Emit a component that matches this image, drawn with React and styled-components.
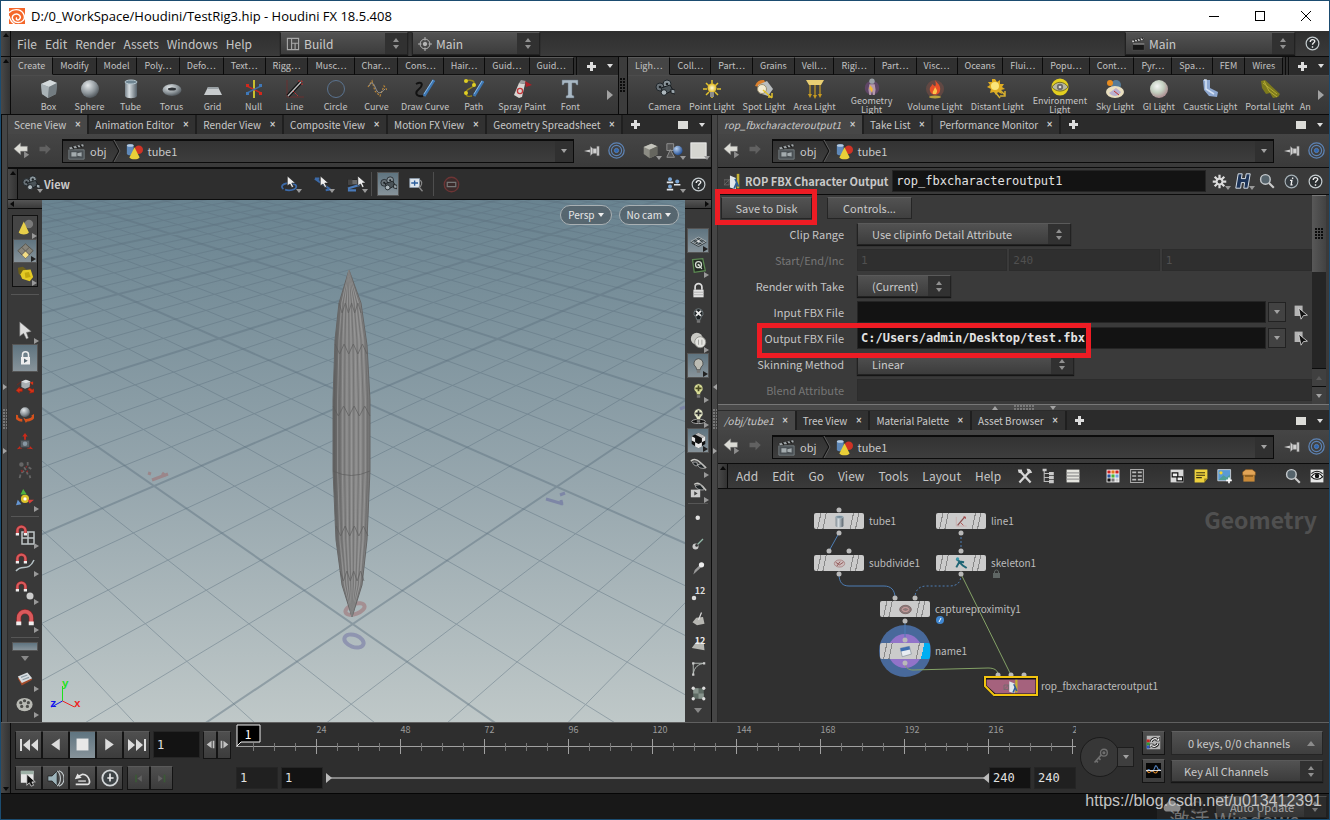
import React from 'react';
import styled, { createGlobalStyle, css } from 'styled-components';

const Global = createGlobalStyle`
  *, *::before, *::after { box-sizing: border-box; }
  html, body { margin: 0; height: 100%; }
  body {
    background: #1b1b1b;
    color: #c9c9c9;
    font: 11px/16px "Noto Sans CJK SC", "Noto Sans", sans-serif;
    overflow: hidden;
  }
  button, input, select { font: inherit; color: inherit; margin: 0; padding: 0; border: 0; background: none; }
  svg { display: block; flex: none; }
`;

/* ---------- icons ---------- */

const HiddenSvg = styled.svg`
  position: absolute;
  width: 0;
  height: 0;
`;

const Defs = () => (
  <HiddenSvg aria-hidden="true">
    <defs>
      <radialGradient id="ball" cx=".38" cy=".3" r=".75">
        <stop offset="0" stopColor="#e4e8ea" /><stop offset=".6" stopColor="#8c9499" /><stop offset="1" stopColor="#474d52" />
      </radialGradient>
      <radialGradient id="gi" cx=".4" cy=".35" r=".7">
        <stop offset="0" stopColor="#f4f6f4" /><stop offset=".5" stopColor="#c3d0c0" /><stop offset="1" stopColor="#a8848a" />
      </radialGradient>
      <radialGradient id="blueball" cx=".35" cy=".3" r=".75">
        <stop offset="0" stopColor="#b8d0ee" /><stop offset="1" stopColor="#1d4a92" />
      </radialGradient>
      <radialGradient id="sun" cx=".5" cy=".5" r=".5">
        <stop offset="0" stopColor="#fffde0" /><stop offset="1" stopColor="#e2b81c" />
      </radialGradient>
      <linearGradient id="cyl" x1="0" x2="1" y1="0" y2="0">
        <stop offset="0" stopColor="#78838b" /><stop offset=".35" stopColor="#d5dce0" /><stop offset="1" stopColor="#56616a" />
      </linearGradient>
    </defs>
  </HiddenSvg>
);

const P = (d, fill, stroke, w = 1, extra) => (
  <path d={d} fill={fill || 'none'} stroke={stroke || 'none'} strokeWidth={w} {...extra} />
);

const lightRays = (c) => (
  <g>
    {P('M10 1v4M10 15v4M1 10h4M15 10h4M4 4l3 3M13 13l3 3M16 4l-3 3M7 13l-3 3', null, c, 1.5)}
  </g>
);

const magnet = (
  <g>
    {P('M3 12V7a5 5 0 0 1 10 0v5', null, '#8d2326', 4)}
    {P('M3 11V7a5 5 0 0 1 10 0v4', null, '#d95a5c', 3)}
    {P('M1 10h4v3H1zM11 10h4v3h-4z', '#eee')}
  </g>
);

const arrowsRed = (
  <g>
    {P('M0 15l4-4v2h3v3H4v2zM20 17l-5 1 1-2-3-2 2-2 3 2 2-1zM19 6l-4 5M1 9l5-4', '#d23318', '#a11d0d', 0.6)}
  </g>
);

const camShapes = (
  <g>
    <circle cx="5" cy="8" r="4" fill="#687177" stroke="#20262a" />
    <circle cx="12" cy="5" r="4" fill="#8a959b" stroke="#20262a" />
    {P('M6 9l9-3 3 5-9 5z', '#4a5358', '#191d20')}
    {P('M16 10l4 1v4l-4-1z', '#9aa5ab', '#191d20')}
    <circle cx="9" cy="13.500" r="2.800" fill="#aeb8bd" stroke="#20262a" />
    <circle cx="5" cy="8" r="1.300" fill="#1c2124" /><circle cx="12" cy="5" r="1.300" fill="#1c2124" />
  </g>
);

const cursor = (x, y, c = '#eee') =>
  P(`M${x} ${y}v11l3-2 2 4 2-1-2-4h4z`, c, '#222', 0.7);

const bulb = (c, inner, edge = '#333') => (
  <g>
    {P('M10 2a5.500 5.500 0 0 0-3 10l1 3h4l1-3a5.500 5.500 0 0 0-3-10z', c, edge, 0.8)}
    {P('M8 15.500h4v3H8z', '#777')}
    {inner}
  </g>
);

const ICONS = {
  houdini: (
    <g>
      <rect width="20" height="20" fill="#f4672a" />
      {P('M0 6C4 1 14 0 18 7s-2 12-8 11-8-8-3-10 9 3 6 6-5-1-3-2', null, '#fff', 1.8)}
      {P('M0 10c1 4 3 8 7 10', null, '#fff', 1.6)}
    </g>
  ),
  box: (
    <g>
      {P('M2 5l9-4 7 3-1 11-8 4-6-4z', '#8c9498')}
      {P('M2 5l9-4 7 3-8 4z', '#d4dadc')}{P('M2 5l8 3-1 11-6-4z', '#a9b2b6')}{P('M10 8l8-4-1 11-8 4z', '#737c81')}
    </g>
  ),
  sphere: <circle cx="10" cy="10" r="9" fill="url(#ball)" />,
  gi: <circle cx="10" cy="10" r="9" fill="url(#gi)" />,
  tube: <g>{P('M4 3v14c1 3 11 3 12 0V3z', 'url(#cyl)')}<ellipse cx="10" cy="3" rx="6" ry="2" fill="#6f8592" stroke="#b7c8d0" /></g>,
  torus: <g><ellipse cx="10" cy="11" rx="9.500" ry="6" fill="url(#ball)" /><ellipse cx="10" cy="10" rx="4" ry="1.500" fill="#2e3236" /></g>,
  grid: <g>{P('M5 8h10l4 8H1z', '#c7cbcd')}{P('M5 8h10l1 2H4z', '#9aa1a5')}</g>,
  null: (
    <g>
      {P('M10 1v18', null, '#c8c02e', 2)}{P('M3 7l14 7', null, '#c32a20', 1.500)}{P('M3 14l14-7', null, '#3b6fa8', 1.500)}
      {P('M9 1h2v3H9zM9 16h2v3H9z', '#c8c02e')}{P('M2 5h3v3H2zM15 13h3v3h-3z', '#d3281c')}{P('M2 13h3v3H2zM15 5h3v3h-3z', '#3f78b8')}
    </g>
  ),
  line: (
    <g>
      {P('M2 1v17h17', null, '#6b3030', 1)}{P('M3 17L16 3', null, '#111', 4)}{P('M3 17L16 3', null, '#b9b9b9', 1.4)}
      {P('M13 2h4v4M8 12l5 5', null, '#c33', 1, { strokeDasharray: '2 1' })}
    </g>
  ),
  lineNode: (
    <g>{P('M2 3v14h16', null, '#c9a5a5', 1)}{P('M4 16L15 3', null, '#8d5050', 2)}{P('M13 3h3v3M9 12l4 4', null, '#a33', 1.200)}</g>
  ),
  circle: <circle cx="10" cy="10" r="8.500" fill="none" stroke="#5a7390" strokeWidth="1" />,
  curve: (
    <g>
      {P('M1 8l4-6 3 10 5 5 4-10 3 4', null, '#b88436', 1.2, { strokeDasharray: '2 1.500' })}
      {P('M2 7c4-8 6 2 8 5s4 2 8-2', null, '#9a9a9a', 1)}
    </g>
  ),
  drawcurve: <g>{P('M1 5c7-4 7 2 3 5s-4 8 4 7', null, '#121212', 2)}{P('M9 17L19 1', null, '#3e78b4', 3)}{P('M9 15L18 1', null, '#8db9e3', 1)}</g>,
  path: (
    <g>
      {P('M1 2c7-2 10 0 9 4S2 9 2 14s4 3 6 3', null, '#968518', 1.4)}
      <circle cx="2" cy="2" r="2" fill="#e0cf25" /><circle cx="10" cy="6" r="2" fill="#e0cf25" /><circle cx="2" cy="14" r="2" fill="#e0cf25" />
      {P('M10 17L19 2', null, '#3e78b4', 3)}{P('M10 15L18 2', null, '#8db9e3', 1)}
    </g>
  ),
  spray: (
    <g>
      {P('M7 4l6 1-3 13-3 1-5-3z', '#d7d5d2')}{P('M9 1l5 1-1 3-6-1z', '#9c9c9c')}{P('M13 2l7 4-6 2z', '#a92127')}
      <circle cx="8" cy="12" r="2.600" fill="none" stroke="#c4373a" strokeWidth="1.300" />
    </g>
  ),
  font: P('M2 1h16v5h-1.500l-1-2H12v12l2 1v2H6v-2l2-1V4H4.500l-1 2H2z', '#a9b8c4', '#5d6b76', 0.5),
  camera: camShapes,
  pointlight: <g>{lightRays('#e2c22c')}<circle cx="10" cy="9" r="4.500" fill="url(#sun)" />{P('M8 13h4v5H8z', '#8c8c8c')}</g>,
  spotlight: (
    <g>
      {P('M1 7a8 8 0 0 1 9-6l3 6-4 2z', '#d97f2c')}{P('M4 6l9-4 6 8-5 7-9-3z', '#b9bdbf')}
      <circle cx="8" cy="10" r="4.500" fill="#f3ead0" stroke="#9a8f70" />{P('M9 11l9 8M14 18h4v-4', null, '#e2c22c', 1.500)}
    </g>
  ),
  arealight: <g>{P('M1 1h18l-3 5H4z', '#e9cf74')}{P('M5 6v11M10 6v12M15 6v11', null, '#c69a20', 1.2)}{P('M3 15h4l-2 4zM8 16h4l-2 4zM13 15h4l-2 4z', '#c69a20')}</g>,
  geolight: (
    <g>
      <circle cx="10" cy="11" r="8" fill="#8b4d9e" opacity=".4" /><circle cx="10" cy="3.500" r="3" fill="#9aa0a6" />
      {P('M7 7h6l1 6-1 6h-2l-1-5-1 5H7l-1-6z', '#b59aac')}{P('M8 8l3 4-1 4-3-4z', '#f2b834')}
    </g>
  ),
  volume: (
    <g>
      <circle cx="10" cy="10" r="9" fill="#6f4b45" opacity=".7" />
      {P('M10 1c4 5 6 6 5 11s-9 5-10 0 2-4 2-7c2 1 2 2 3 2s1-3 0-6z', '#e5502a')}
      {P('M10 8c2 3 3 4 1 7H8c-1-3 1-3 2-7z', '#fcc24a')}<ellipse cx="10" cy="18" rx="6" ry="1.500" fill="#b8a23c" />
    </g>
  ),
  distant: (
    <g>
      {P('M8 0l2 3 3-2 0 4 4 0-2 3 3 2-4 1 1 4-4-2-2 3-2-3-4 1 1-4-4-2 3-2-2-3 4 0 0-4z', '#e0ad22')}
      <circle cx="8" cy="7" r="4" fill="#fbe57a" />{P('M12 10l6 6M8 13l5 6M18 12v5h-5', null, '#d6b030', 1.500)}
    </g>
  ),
  envlight: (
    <g>
      <circle cx="10" cy="10" r="9.500" fill="#e3cf20" />{P('M1 10c5-7 13-7 18 0-5 6-13 6-18 0z', '#b8b8a0', '#6b6420')}
      <circle cx="10" cy="10" r="3.500" fill="#6b6b6b" /><circle cx="10" cy="10" r="1.500" fill="#ddd" />
    </g>
  ),
  sky: (
    <g>
      <circle cx="11" cy="6" r="5" fill="#567c98" /><circle cx="5" cy="4" r="3" fill="#e98d1f" />
      <ellipse cx="10" cy="13" rx="9" ry="6" fill="#e9dfc0" />{P('M4 14c4 4 9 4 12-1l-5-4z', '#b9b0d0')}{P('M9 12l5 4', null, '#c03030', 1)}
    </g>
  ),
  caustic: <g>{P('M3 1h7v8l8 4-1 5-8-1-5-6z', '#8ea8d0')}{P('M4 1h2v9l8 5', null, '#d6e2f4', 1.500)}</g>,
  portal: <g>{P('M1 2l4-1 15 14-2 3-5 1-3-5-4 1-4-6z', '#7d7a1c')}{P('M4 2l5 10 8 6M3 4l14 11', null, '#b4ab36', 1)}</g>,
  clap: (
    <g>
      {P('M1 8h18v11H1z', '#4a5054', '#7b8488')}{P('M1 5L18 1l1 3L2 8z', '#a3a9ac', '#222', 0.6)}
      {P('M5 4l2 3M10 3l2 3M14 2l2 3', null, '#1c1c1c', 1.800)}{P('M4 11h6v5H4zM11 12l5-1v5l-5-1z', '#a3abae')}
    </g>
  ),
  clapBig: (
    <g>
      {P('M2 9h17v10H2z', '#171717', '#555')}{P('M1 5L18 1l1 3L2 8z', '#ddd', '#222', 0.6)}
      {P('M4 4l2 3M8 3l2 3M12 2l2 3M16 1l2 3', null, '#1c1c1c', 1.600)}{P('M3 9h16v2H3z', '#888')}
    </g>
  ),
  shapes: (
    <g>
      {P('M1 3v10c1 2 7 2 8 0V3c-1-2-7-2-8 0z', '#5e88b8')}<ellipse cx="5" cy="3" rx="4" ry="1.500" fill="#b7cde4" />
      <circle cx="15" cy="8" r="5" fill="#cf3325" />{P('M10 5l6 12c-2 3-10 3-12 0z', '#e9cf38')}
    </g>
  ),
  back: <g>{P('M1 8l8-7v4h8v6H9v4z', '#dcdcd6', '#777', 0.6)}{P('M13 11l6 4-6 4z', '#8d8d8d')}</g>,
  fwd: P('M17 8L10 2v3H2v6h8v4z', '#616161'),
  pin: <g>{P('M0 10l8-2v4z', '#ccc')}{P('M8 4v12l3-3V7zM11 7h5v6h-5zM16 4h3v12h-3z', '#d2d2d2', '#666', 0.5)}</g>,
  target: (
    <g fill="none" stroke="#5d83b4">
      <circle cx="10" cy="10" r="9" strokeWidth="1.500" /><circle cx="10" cy="10" r="6" strokeWidth="1.300" /><circle cx="10" cy="10" r="2.500" fill="#2d67b5" />
    </g>
  ),
  aim: (
    <g fill="none" stroke="#b5b5b5" strokeWidth="1.400">
      <circle cx="10" cy="10" r="7" /><circle cx="10" cy="10" r="2.500" fill="#b5b5b5" />{P('M10 0v5M10 15v5M0 10h5M15 10h5', null, '#b5b5b5', 1.400)}
    </g>
  ),
  desk: P('M2 2h16v16H2zM8 2v16M8 9h10M13 9v9', null, '#a8a8a8', 1.600),
  help: (
    <g>
      <circle cx="10" cy="10" r="8.500" fill="#2a2e30" stroke="#c5cccf" strokeWidth="1.600" />
      {P('M7 8c0-4 6-4 6-1 0 2-3 2-3 4.500M10 13.500v2', null, '#eee', 1.900)}
    </g>
  ),
  info: (
    <g>
      <circle cx="10" cy="10" r="8.500" fill="#353b40" stroke="#a7b2b8" strokeWidth="1.500" />{P('M11.500 4.500v2M8 8.500h2.500l-1 6h2', null, '#eee', 1.800)}
    </g>
  ),
  gear: (
    <g>
      {P('M10 1v18M1 10h18M3.600 3.600l12.800 12.800M16.400 3.600L3.600 16.400', null, '#dcdcdc', 3)}
      <circle cx="10" cy="10" r="5" fill="#dcdcdc" /><circle cx="10" cy="10" r="2.500" fill="#3a3a3a" />
    </g>
  ),
  hlogo: <g>{P('M4 1h5l-1 6h5l1-6h5l-3 18h-5l1-7H8l-1 7H1z', '#1c3357', '#dfe6ee', 1.200)}</g>,
  search: <g><circle cx="8" cy="8" r="6" fill="#55636b" stroke="#c4c9cc" strokeWidth="1.800" />{P('M12.500 12.500l6 6', null, '#ccc', 2.600)}</g>,
  rop: (
    <g>
      {P('M0 8h6v6H0z M0 14L7 7', null, '#6b6b6b')}{P('M7 3l7 3v13l-7-2z', '#dfe6ea')}{P('M15 1h3v17h-3z', '#c4b132')}
      {P('M13 7l2 4-3 7M15 11l2 5', null, '#2c5f96', 2)}
    </g>
  ),
  page: <g>{P('M2 2h10v13H2z', '#b4b4b4')}{P('M7 5l11 9-5 .500-3 4.500z', '#111', '#ddd', 1)}</g>,
  wrench: <g>{P('M3 18L16 4M4 4l13 14', null, '#d5d5d5', 2.800)}{P('M12 1c4-1 6 2 7 5l-5 1zM1 2l5 0 1 5-5-1z', '#d5d5d5')}</g>,
  tree: <g>{P('M4 2v15h6M4 7h6M4 12h6', null, '#bbb', 1.300)}{P('M2 1h5v3H2zM10 5h6v4h-6zM10 10h6v4h-6zM10 15h6v4h-6z', '#c9c9c9')}</g>,
  list: <g>{P('M2 2h16v16H2z', '#e4e4de')}{P('M2 6h16M2 10h16M2 14h16', null, '#999', 1.600)}</g>,
  palette: (
    <g>
      {P('M2 2h16v16H2z', '#fff')}
      {P('M3 3h4v4H3zM13 3h4v4h-4z', '#c22')}{P('M8 3h4v4H8z', '#e5781f')}{P('M3 8h4v4H3z', '#27509a')}{P('M8 8h4v4H8z', '#4db034')}
      {P('M13 8h4v4h-4z', '#74a0da')}{P('M3 13h4v4H3z', '#111')}{P('M8 13h4v4H8z', '#777')}{P('M13 13h4v4h-4z', '#ccc')}
    </g>
  ),
  table: <g>{P('M2 2h16v16H2z', '#333', '#aaa', 1.300)}{P('M4 5.500h5M11 5.500h5M4 10h5M11 10h5M4 14.500h5M11 14.500h5', null, '#bbb', 2)}</g>,
  panels: <g>{P('M2 2h16v16H2z', '#d8d8d8')}{P('M4 6h7v5H4zM10 11h7v5h-7z', '#eee', '#111', 1.500)}</g>,
  note: <g>{P('M2 2h16v11l-4 5H2z', '#ebcf3d')}{P('M18 13h-4v5z', '#9c861b')}{P('M4 6h11M4 9h11M4 12h7', null, '#3a3210', 1.400)}</g>,
  image: <g>{P('M1 2h16v14H1z', '#5a9ad4', '#ddd')}<circle cx="5" cy="6" r="2" fill="#f3d531" />{P('M2 15l6-6 4 3 4-4v7z', '#4f9f96')}{P('M15 12v7M11.500 15.500h7', null, '#fff', 2)}</g>,
  crate: <g>{P('M3 8h14v9H3z', '#c98a38')}{P('M2 5l4-3h8l4 3v4H2z', '#e3a557', '#7d5119', 0.7)}{P('M5 9h10v2H5z', '#8a5c20')}</g>,
  eye: <g>{P('M2 2h16v16H2z', '#e6e6e6')}{P('M3 11c4-6 10-6 14 0-4 4-10 4-14 0z', '#fff', '#111', 1.300)}<circle cx="10" cy="10" r="2.800" fill="#111" />{P('M3 7c4-4 10-4 14 0', null, '#111', 1.300)}</g>,
  orbit: <g><ellipse cx="9" cy="13" rx="8" ry="4" fill="none" stroke="#3c6aa8" strokeWidth="2" strokeDasharray="14 2" />{cursor(7, 1)}</g>,
  pan: <g>{P('M1 4l17 12M1 4l5 0M18 16l-5 1', null, '#3c6aa8', 2.400)}{cursor(7, 1)}</g>,
  dolly: <g>{P('M1 5h11v6H1z', '#6a6a6a', '#222')}{P('M1 5h5v6H1z', '#444')}{P('M1 15l13-4M1 17h9', null, '#4a7ab8', 2.400)}{cursor(12, 1)}</g>,
  zoomin: <g>{P('M1 2h13v12H1z', '#dce4ec', '#8b9cae', 1)}{P('M3 8h9M7.500 4.500v7', null, '#2b5d9c', 1.800)}{P('M13 13l5 6', null, '#888', 1.800)}<path d="M15 4a6 6 0 0 1-2 10" fill="none" stroke="#888" strokeWidth="1.500" /></g>,
  stop: <g><circle cx="10" cy="10" r="8.500" fill="#3b2b2b" stroke="#6d3535" strokeWidth="1.600" />{P('M5 7.500h10v5H5z', null, '#777', 1.400)}</g>,
  people: <g fill="#4d7fb8"><circle cx="5" cy="4" r="2.500" fill="#7aa6d6" /><circle cx="14" cy="7" r="2.500" fill="#7aa6d6" /><circle cx="5" cy="13" r="2.500" fill="#7aa6d6" />{P('M1 9h8V7H1zM10 12h8v-2h-8zM1 18h8v-2H1z', '#e0e4e8')}</g>,
  cube: <g>{P('M2 6l9-4 7 3v10l-9 4-7-5z', '#8c8c84')}{P('M2 6l9-4 7 3-9 4z', '#c4c4bc')}{P('M9 9l9-4v10l-9 4z', '#66665f')}</g>,
  ghost: <g>{P('M1 2h8v8H1zM5 9l5 9H1z', '#555', '#9a9a9a', 1)}<circle cx="14" cy="10" r="5.500" fill="url(#blueball)" /></g>,
  square: <rect x="1" y="1" width="18" height="18" fill="#d5d5d0" stroke="#f5f5f5" />,
  cone: <g><circle cx="14" cy="6" r="5" fill="#7a7a7a" />{P('M8 3l6 13c-2 3-10 3-12 0z', '#e8cf4a')}</g>,
  diamonds: <g>{P('M10 1l9 8-9 9-9-9z', '#87847a', '#555248')}{P('M5.500 5l9 9M14.500 5l-9 9', null, '#55534b', 1)}{P('M10 10l4 4-4 4-4-4z', '#f2dc86')}</g>,
  goldbox: <g>{P('M1 2l6-1 4 3-5 9-4-4z', '#6b5f1c')}{P('M7 5l9-1 3 9-4 5-9-3-2-5z', '#e4ca25')}{P('M9 8l5-1 2 6-6 1z', '#c2a70e')}</g>,
  pointer: P('M4 1v15l4-3 3 6 2-1-2-6 5-1z', '#dedede', '#777', 0.6),
  lockcur: <g>{P('M6 8V5a4 4 0 0 1 8 0v3', null, '#eee', 2)}{P('M4 8h12v10H4z', '#eee')}{P('M8 10l5 3-5 3z', '#5a6a74')}</g>,
  move: <g>{arrowsRed}{P('M6 5l5-2 5 2-1 6-5 2-4-2z', '#a9afb2')}{P('M6 5l5-2 5 2-5 2z', '#dde0e2')}{P('M15 6l4-1v4z', '#d23318')}</g>,
  rotate: <g>{P('M1 11c-1 4 2 6 6 6M19 11c1 4-3 6-8 6', null, '#d5521d', 3)}{P('M8 14l5 3-2 3zM17 12l3-2v4z', '#d5521d')}<circle cx="10" cy="8" r="5.500" fill="url(#ball)" /></g>,
  scale: <g>{P('M10 0l3 4h-2v5H9V4H7zM1 18l4-4 2 3zM19 18l-4-4-3 3z', '#cc2a1a')}{P('M5 8h10v8H5z', '#596065', '#3b4145')}<circle cx="10" cy="12" r="2.500" fill="#8797a3" /></g>,
  pose: (
    <g fill="none" stroke="#666" strokeWidth="2">
      <circle cx="6" cy="4" r="1.500" fill="#666" /><path d="M13 1v4M9 7l2 3M14 7l3 2M9 11l-3 2M5 15l-1 4M12 12l1 3M15 16l1 3" />
      <path d="M6 10l1 2M12 11l1 1M11 6l1 1" stroke="#8d2b2b" />
    </g>
  ),
  gizmo: <g><circle cx="10" cy="11" r="4.500" fill="#dcc22a" />{P('M8 0l4 6H5z', '#4fb23f')}{P('M20 12l-5 4-2-4z', '#d4403a')}{P('M0 18l2-6 4 5z', '#6596d2')}<circle cx="10" cy="11" r="1.800" fill="#fff" /></g>,
  magnetgrid: <g>{P('M7 7h12v12H7zM13 7v12M7 13h12', null, '#c0c6c8', 1.500)}<g transform="scale(.8)">{magnet}</g></g>,
  magnetcurve: <g>{P('M1 18c6-8 12 2 18-11', null, '#b4c0c4', 1.500)}<g transform="scale(.8)">{magnet}</g></g>,
  magnetpt: <g><circle cx="15" cy="15" r="3.500" fill="#ccc" /><g transform="scale(.8)">{magnet}</g></g>,
  magnet: <g transform="scale(1.250)">{magnet}</g>,
  sheets: <g>{P('M1 9l13-5 5 7-13 7z', '#a24b2a')}{P('M1 7l12-5 6 7-13 6z', '#d8dde0')}{P('M5 8l8-3M7 11l8-3', null, '#8d9ca6', 1.500)}</g>,
  reel: <g><ellipse cx="9" cy="9" rx="8.500" ry="7" fill="#b9bab4" />{[[5, 7], [9, 5], [13, 7], [6, 11], [12, 11]].map(([x, y]) => <circle key={`${x}${y}`} cx={x} cy={y} r="1.700" fill="#4d4d4a" />)}</g>,
  mesh: <g>{P('M1 12l9-5 9 5-9 5zM5 12l5-3 5 3-5 3zM5 10l9 5M14 9l-9 5', null, '#2e3437', 1.100)}{P('M1 11l9-5 9 5-9 5zM6 8l9 5M14 8l-9 5', null, '#c5cbcd', 0.700)}<circle cx="10" cy="11" r="1.500" fill="#ddd" /></g>,
  snap: <g>{P('M3 3l12-1 3 14-13 2z', '#232b23', '#5c8a52', 1.500)}<circle cx="10" cy="9" r="3.500" fill="none" stroke="#d6dcd4" strokeWidth="1.500" />{P('M10 9l4 5', null, '#d6dcd4', 1.500)}<circle cx="10" cy="9" r="1.200" fill="#d6dcd4" /></g>,
  lock: <g>{P('M6 9V6a4 4 0 0 1 8 0v3', null, '#ddd', 2)}{P('M4 9h12v9H4z', '#e2e2e2')}{P('M4 12h12M4 15h12', null, '#aaa', 1)}</g>,
  bulbx: bulb('#1d2224', P('M7 4.500l6 6M13 4.500l-6 6', null, '#e9e9e9', 2.200), '#8b969b'),
  balls: <g><circle cx="8" cy="8" r="7" fill="#c9c9c4" /><circle cx="12" cy="12" r="6.500" fill="#e4e4e0" stroke="#8d8d88" />{P('M10 9v6M14 9v6', null, '#9a9a96', 1)}</g>,
  bulb: bulb('#bcbcb4'),
  bulbplus: bulb('#d8dc96', P('M10 4v7M6.500 7.500h7', null, '#4a4a22', 2)),
  bulbring: <g><ellipse cx="10" cy="17" rx="8" ry="2.500" fill="#111" stroke="#bbb" />{bulb('#e5e8c8', P('M10 4v7M6.500 7.500h7', null, '#333', 2))}</g>,
  checker: <g>{P('M2 5l8-4 8 4v9l-8 5-8-5z', '#111')}{P('M6 3l4-2 8 4-4 2z', '#bbb')}{P('M2 5l4 2v5l-4-2zM6 12l4 2v5l-4-2zM14 7l4-2v5l-4 2zM10 14l4-2v5l-4 2z', '#e6e6e6')}</g>,
  glasses: <g>{P('M1 5c4-5 9-1 18 8', null, '#c8c8c4', 1.800)}{P('M3 6c1 4 4 5 6 4l-1-4z', '#1f2426', '#bbb', 1)}{P('M9 9c1 4 5 5 9 4l-5-5z', '#1f2426', '#bbb', 1)}</g>,
  glassplay: <g>{P('M5 3c4-4 9 0 14 7', null, '#c8c8c4', 1.600)}{P('M6 4c1 5 7 6 11 5l-5-6z', '#1f2426', '#bbb', 1)}{P('M1 9h11v9H1z', '#ccc')}{P('M5 11l4 2.500-4 2.500z', '#444')}</g>,
  dot: <circle cx="9" cy="9" r="3" fill="#e2e2e2" />,
  ptnormal: <g>{P('M7 13l9-9', null, '#93b8a8', 1.600)}<circle cx="6" cy="14" r="4" fill="#c9c9c9" /><circle cx="7.500" cy="12.500" r="1.800" fill="#333" /></g>,
  pttrail: <g>{P('M3 18l2-6 8-8 2 3z', '#9a9a9a')}<circle cx="14" cy="5" r="3.500" fill="#eee" /></g>,
  ptnum: <g><circle cx="4" cy="16" r="3" fill="#ddd" /><text x="5" y="11" fontSize="12" fontWeight="700" fill="#ddd">12</text></g>,
  prim: <g>{P('M2 15l5-6 9-1 2 9-10 2z', '#b7b7b2')}{P('M10 12l4-10', null, '#ddd', 1.600)}</g>,
  primnum: <g>{P('M1 16l6-8 10 1 1 10z', '#b7b7b2')}<text x="5" y="10" fontSize="12" fontWeight="700" fill="#eee">12</text></g>,
  hull: <g>{P('M3 18V3h15M3 18C4 8 10 4 18 3', null, '#bdc4c0', 1.200)}{P('M1.500 1.500h3v3h-3zM16 1.500h3v3h-3zM1.500 16.500h3v3h-3z', '#ccc')}</g>,
  chips: <g>{P('M3 3h14v14H3z', '#5e6b64')}{P('M3 3h7v7H3zM10 10h7v7h-7z', '#87938c')}{[[3, 3], [17, 3], [3, 17], [17, 17]].map(([x, y]) => <circle key={`${x}-${y}`} cx={x} cy={y} r="2.200" fill="#ddd" />)}</g>,
  first: P('M1 4h2v12H1zM11 4v12l-7-6zM19 4v12l-7-6z', '#dcdcdc'),
  prev: P('M15 3v14L5 10z', '#dcdcdc'),
  stopbtn: P('M3 3h14v14H3z', '#e8e8e8'),
  play: P('M5 3v14l10-7z', '#dcdcdc'),
  last: P('M19 4h-2v12h2zM9 4v12l7-6zM1 4v12l7-6z', '#dcdcdc'),
  stepback: P('M12 3v14L3 10zM14 3h3v14h-3z', '#c2c2c2'),
  stepfwd: P('M8 3v14l9-7zM3 3h3v14H3z', '#c2c2c2'),
  keyprev: <g>{P('M4 3h3v14H4z', '#3b5a36')}{P('M16 4v12L8 10z', '#626262')}</g>,
  keynext: <g>{P('M14 3h3v14h-3z', '#3b5a36')}{P('M4 4v12l8-6z', '#626262')}</g>,
  pick: <g>{P('M1 1h15v14H1z', '#e6e6e6')}{P('M1 1h15v4H1z', '#9db0a6')}{P('M8 5v13l3-3 2 4 3-1-2-4h4z', '#111', '#ddd', 0.9)}</g>,
  audio: <g>{P('M1 7h5l6-6v18l-6-6H1z', '#9db4bb', '#222', 1)}{P('M12 1c5 4 5 14 0 18M14 1c8 3 8 15 0 18', null, '#c8d0d3', 1.300)}</g>,
  loop: <g>{P('M2 17h14c4 0 3-11-6-12L6 7', null, '#e2e2e2', 2)}{P('M1 11l3-7 5 5z', '#e2e2e2')}{P('M5 13h9', null, '#e2e2e2', 1.500)}</g>,
  clock: <g><circle cx="10" cy="10" r="8.500" fill="#3d4346" stroke="#d2d6d8" strokeWidth="2" />{P('M10 5v9M7 10h7', null, '#eee', 1.800)}</g>,
  key: <g fill="none" stroke="#707070" strokeWidth="1.600"><circle cx="14" cy="5.500" r="4" /><circle cx="14" cy="5.500" r="1" />{P('M11 8l-8 9M5 15l2 2M8 12l2 2', null, '#707070', 2)}</g>,
  sync: (
    <g>
      {P('M1 1h18v18H1z', '#b4b4b4')}{P('M1 6h4v4H1z', '#c92222')}{P('M1 10h4v4H1z', '#2c9a35')}{P('M1 14h4v4H1z', '#2b55c4')}
      {P('M7 9a5 5 0 0 1 8-3M16 11a5 5 0 0 1-8 3', null, '#111', 4)}{P('M7 9a5 5 0 0 1 8-3M16 11a5 5 0 0 1-8 3', null, '#fff', 1.600)}
      {P('M13 8h5V3zM10 12H5v5z', '#fff', '#111', 0.800)}
    </g>
  ),
  wave: <g>{P('M0 0h20v20H0z', '#070707')}{P('M1 12c3-8 5 2 8-1s3-9 5-7 2 8 5 4', null, '#5a8fd2', 1.400)}{P('M1 9c3 8 5 1 7 1s5 8 8-1', null, '#e08a2a', 1.400)}{P('M0 10h20', null, '#eee', 1.200)}</g>,
  blob: <g><ellipse cx="10" cy="10" rx="8" ry="5.500" fill="#cdbcbc" stroke="#9c6e6e" />{P('M4 8l6 4 6-4M6 14l5-7', null, '#8a4c4c', 1.300)}</g>,
  capture: <g><ellipse cx="10" cy="10" rx="9" ry="6.500" fill="#8d7b7b" stroke="#6d5454" /><ellipse cx="10" cy="10" rx="5" ry="3" fill="none" stroke="#d9a5a5" strokeWidth="1.500" /></g>,
  bone: <g>{P('M2 3l5 4 7 1M7 7l-5 9M7 8l5 5 6 4', null, '#1f6575', 3)}<circle cx="4" cy="3" r="2.500" fill="#3b98aa" /></g>,
  tag: <g>{P('M2 5l14-3 3 12-14 4z', '#e8edf2', '#6b7a88', 0.8)}{P('M2 5l14-3 1 5-14 3z', '#3e6fb0')}</g>,
  cook: <g>{P('M3 15a5 5 0 0 1 1-9 6 6 0 0 1 11 1 4 4 0 0 1 1 8z', '#a4a4a4')}</g>,
  refresh: <g>{P('M4 9a6 6 0 0 1 10-4M16 11a6 6 0 0 1-10 4', null, '#4e4e4e', 2)}{P('M12 7h5V2zM8 13H3v5z', '#4e4e4e')}</g>,
};

const Icon = ({ name, size = 18 }) => (
  <svg width={size} height={size} viewBox="0 0 20 20" aria-hidden="true">{ICONS[name]}</svg>
);

const Tri = styled.i`
  flex: none;
  width: 0;
  height: 0;
  border: ${(p) => p.$s || 4}px solid transparent;
  ${(p) => {
    const s = p.$s || 4;
    const c = p.$c || '#a2a2a2';
    if (p.$d === 'up') return `border-bottom: ${s + 1}px solid ${c}; border-top: 0;`;
    if (p.$d === 'right') return `border-left: ${s + 1}px solid ${c}; border-right: 0;`;
    if (p.$d === 'left') return `border-right: ${s + 1}px solid ${c}; border-left: 0;`;
    return `border-top: ${s + 1}px solid ${c}; border-bottom: 0;`;
  }}
`;

/* ---------- window frame ---------- */

const Window = styled.div`
  display: flex;
  flex-direction: column;
  height: 100vh;
  border: 1px solid #1b4c70;
  background: #2e2e2e;
`;

const TitleBar = styled.header`
  display: flex;
  align-items: center;
  flex: none;
  height: 30px;
  padding-left: 8px;
  background: #fff;
  color: #000;
`;
const Title = styled.h1`
  flex: 1;
  margin: 0;
  padding-left: 6px;
  font: 400 13px/16px "Open Sans", "Noto Sans", sans-serif;
`;
const WinButton = styled.button`
  width: 46px;
  height: 28px;
  display: grid;
  place-items: center;
`;

const Bar = styled.div`
  display: flex;
  align-items: center;
  flex: none;
  background: linear-gradient(#2f2f2f, #3a3a3a);
`;
const MenuBar = styled(Bar)`
  height: 25px;
  ${(p) => p.$framed && css`
    height: 26px;
    border-top: 1px solid #0c0c0c;
    border-bottom: 1px solid #0c0c0c;
  `}
`;
const Grip = styled.div`
  flex: none;
  align-self: stretch;
  width: ${(p) => p.$w || 10}px;
  display: flex;
  flex-direction: column;
  align-items: center;
  justify-content: ${(p) => (p.$end ? 'flex-end' : 'flex-start')};
  padding: 2px 0;
  background: linear-gradient(90deg, #484848, #333);
  border-right: 1px solid #0a0a0a;
`;
const Menus = styled.nav`
  display: flex;
  gap: ${(p) => p.$gap}px;
  padding: 0 ${(p) => p.$pad}px;
`;
const MenuButton = styled.button`
  color: #c6c6c6;
  font-size: 12px;
  line-height: 20px;
`;
const Spring = styled.div`
  flex: ${(p) => p.$g || 1};
`;

/* ---------- drop-downs ---------- */

const Combo = styled.label`
  display: flex;
  align-items: center;
  flex: none;
  position: relative;
  width: ${(p) => p.$w}px;
  height: ${(p) => p.$h || 22}px;
  padding-left: ${(p) => p.$pad || 15}px;
  gap: 4px;
  background: linear-gradient(#525252, #3c3c3c);
  border: 1px solid #222;
  border-top-color: #5a5a5a;
  box-shadow: 0 1px 1px #151515;
  color: #cacaca;
  margin-left: ${(p) => p.$ml || 0}px;
  select {
    appearance: none;
    flex: 1;
    align-self: stretch;
    min-width: 0;
    font-size: ${(p) => p.$fs || 11}px;
    background: transparent;
    outline: 0;
  }
  option { color: #222; }
`;
const Spinner = styled.span`
  display: flex;
  flex-direction: column;
  align-items: center;
  justify-content: center;
  gap: 3px;
  width: 22px;
  align-self: stretch;
  background: #313131;
  pointer-events: none;
`;
const Select = ({ label, value, icon, ...rest }) => (
  <Combo {...rest}>
    {icon && <Icon name={icon} size={14} />}
    <select aria-label={label} defaultValue={value}><option>{value}</option></select>
    <Spinner><Tri $d="up" $s={3} $c="#909090" /><Tri $s={3} $c="#909090" /></Spinner>
  </Combo>
);

/* ---------- shelves ---------- */

const Shelves = styled.div`
  display: flex;
  flex: none;
  height: 59px;
  border-top: 1px solid #0a0a0a;
  border-bottom: 1px solid #0a0a0a;
`;
const Shelf = styled.section`
  display: flex;
  flex-direction: column;
  min-width: 0;
  flex: ${(p) => p.$grow} 1 0;
  background: #3a3a3a;
`;
const ShelfTabs = styled.div`
  display: flex;
  height: 18px;
  flex: none;
  background: #2b2b2b;
  overflow: hidden;
`;
const ShelfTab = styled.button`
  flex: none;
  padding: 0 7px;
  font-size: 9px;
  line-height: 16px;
  white-space: nowrap;
  color: #c2c2c2;
  background: ${(p) => (p.$on ? '#454545' : '#303030')};
  border-right: 1px solid #0a0a0a;
  border-top: 1px solid #5a5a5a;
  border-bottom: 1px solid ${(p) => (p.$on ? '#454545' : '#111')};
`;
const Thin = styled.span`
  flex: 0 1 12px;
  background: repeating-linear-gradient(90deg, #2e2e2e 0 2px, #0c0c0c 2px 3px);
`;
const TabEnd = styled.span`
  display: flex;
  align-items: center;
  flex: none;
  gap: 11px;
  padding: 0 ${(p) => p.$pad || 5}px 0 8px;
`;
const Plus = styled.button`
  width: 9px;
  height: 9px;
  flex: none;
  background: linear-gradient(#ddd, #ddd) center / 9px 3px no-repeat, linear-gradient(#ddd, #ddd) center / 3px 9px no-repeat;
`;
const Tools = styled.div`
  display: flex;
  flex: 1;
  min-width: 0;
  padding-left: ${(p) => p.$pad}px;
  overflow: hidden;
`;
const ToolButton = styled.button`
  display: flex;
  flex-direction: column;
  align-items: center;
  flex: none;
  min-width: ${(p) => (p.$narrow ? 0 : 41)}px;
  width: ${(p) => (p.$wide ? '64px' : 'auto')};
  padding: ${(p) => (p.$wide ? 2 : 3)}px ${(p) => (p.$narrow ? 2 : 4)}px 0;
  font-size: 9px;
  line-height: ${(p) => (p.$wide ? 9 : 14)}px;
  color: #c4c4c4;
  white-space: ${(p) => (p.$wide ? 'normal' : 'nowrap')};
  svg { margin-bottom: ${(p) => (p.$wide ? 0 : 1)}px; }
`;
const More = styled.button`
  flex: none;
  display: grid;
  place-items: center;
  width: 17px;
`;
const ToolRow = styled.div`
  display: flex;
  flex: 1;
  min-height: 0;
  border-top: 1px solid #4c4c4c;
  background: linear-gradient(#474747, #3b3b3b 60%, #363636);
`;
const Dots = styled.span`
  width: ${(p) => p.$w}px;
  height: ${(p) => p.$h}px;
  background: radial-gradient(circle at 1px 1px, ${(p) => p.$c || '#777'} 1px, transparent 1px) 0 0 / 3px 3px;
`;
const ShelfSplit = styled.div`
  flex: none;
  display: grid;
  place-items: center;
  width: 10px;
  background: #3c3c3c;
  border-left: 1px solid #0a0a0a;
  border-right: 1px solid #0a0a0a;
`;

const ShelfPanel = ({ tabs, tools, grow, pad, extra }) => (
  <Shelf $grow={grow}>
    <ShelfTabs>
      {tabs.map((t, i) => <ShelfTab key={i} $on={i === 0}>{t}</ShelfTab>)}
      <Thin />
      <Spring />
      <TabEnd><Plus aria-label="Add shelf" /><Tri $c="#ddd" $s={3} /></TabEnd>
    </ShelfTabs>
    <ToolRow>
      <Tools $pad={pad}>
        {tools.map(([icon, label, wide]) => (
          <ToolButton key={label} $wide={wide}><Icon name={icon} size={wide ? 18 : 20} />{label}</ToolButton>
        ))}
        {extra}
      </Tools>
      <More aria-label="More tools"><Tri $d="right" $s={5} /></More>
    </ToolRow>
  </Shelf>
);

/* ---------- panes ---------- */

const Main = styled.main`
  display: flex;
  flex: 1;
  min-height: 0;
  background: #3a3a3a;
`;
const Pane = styled.section`
  display: flex;
  flex-direction: column;
  min-width: 0;
  min-height: 0;
  flex: ${(p) => p.$grow || 1} 1 0;
`;
const SideRail = styled.div`
  flex: none;
  display: flex;
  flex-direction: column;
  align-items: center;
  justify-content: center;
  gap: 19px;
  width: 7px;
  background: #454545;
  border-left: 1px solid #0d0d0d;
  border-right: 1px solid #2c2c2c;
`;
const PaneTabs = styled.div`
  display: flex;
  align-items: stretch;
  flex: none;
  height: 19px;
  background: #2b2b2b;
`;
const PaneTab = styled.div`
  display: flex;
  align-items: center;
  flex: none;
  gap: 8px;
  padding: 0 6px;
  font-size: 10px;
  white-space: nowrap;
  background: ${(p) => (p.$on ? '#474747' : '#313131')};
  border-right: 2px solid #1f1f1f;
  font-style: ${(p) => (p.$italic ? 'italic' : 'normal')};
`;
const Close = styled.button`
  font: 700 8px/12px "DejaVu Sans", sans-serif;
  width: 7px;
  color: #d0d0d0;
`;
const WhiteBox = styled.i`
  width: 10px;
  height: 8px;
  background: #dcdcd8;
`;
const Tabs = ({ items, italic }) => (
  <PaneTabs>
    {items.map((t, i) => (
      <PaneTab key={t} $on={i === 0} $italic={italic && i === 0}>
        {t}<Close aria-label={`Close ${t}`}>×</Close>
      </PaneTab>
    ))}
    <TabEnd $pad={1}><Plus aria-label="Add tab" /></TabEnd>
    <Spring />
    <TabEnd $pad={6}><WhiteBox /><Tri $c="#ddd" $s={3} /></TabEnd>
  </PaneTabs>
);

const PathRow = styled.div`
  display: flex;
  align-items: center;
  flex: none;
  height: 33px;
  gap: 6px;
  padding: 0 1px 0 4px;
  background: linear-gradient(#454545, #3a3a3a);
`;
const Crumbs = styled.div`
  display: flex;
  align-items: center;
  flex: 1;
  height: 24px;
  padding-left: 5px;
  margin-left: 2px;
  gap: 5px;
  border: 1px solid #0b0b0b;
  border-top-width: 2px;
  background: linear-gradient(#333, #3d3d3d);
`;
const DropEnd = styled.span`
  margin-left: auto;
  align-self: stretch;
  width: 18px;
  display: grid;
  place-items: center;
  background: #303030;
`;
const Chevron = () => (
  <svg width="9" height="22" viewBox="0 0 9 22"><path d="M1 0l6 11-6 11" fill="none" stroke="#111" strokeWidth="1.500" /><path d="M2 0l6 11-6 11" fill="none" stroke="#5c5c5c" /></svg>
);
const IconRow = styled.span`
  display: flex;
  align-items: center;
  gap: ${(p) => p.$gap || 7}px;
  padding: 0 ${(p) => p.$pad || 0}px;
`;
const PathTools = styled(IconRow)`
  margin-left: 10px;
`;
const IconButton = styled.button`
  display: grid;
  place-items: center;
  flex: none;
  position: relative;
  width: ${(p) => p.$w || 18}px;
  height: ${(p) => p.$h || 18}px;
  ${(p) => p.$on && css`
    background: linear-gradient(#5f7480, #87939a);
    border: 1px solid #555;
  `}
  ${(p) => p.$menu && css`
    &::after {
      content: "";
      position: absolute;
      right: ${p.$menu === 'down' ? -3 : 0}px;
      bottom: 0;
      border: 3px solid transparent;
      ${p.$menu === 'down' ? 'border-top: 4px solid #999; border-bottom: 0;' : `border-left: 5px solid ${p.$on ? '#222' : '#999'}; border-right: 0;`}
    }
  `}
`;
const PathBar = ({ children }) => (
  <PathRow>
    <IconButton aria-label="Back"><Icon name="back" size={17} /></IconButton>
    <IconButton aria-label="Forward"><Icon name="fwd" size={15} /></IconButton>
    <Crumbs>
      <Icon name="clap" size={17} /><span>obj</span><Chevron /><Icon name="shapes" size={17} /><span>tube1</span>
      <DropEnd><Tri $s={3} /></DropEnd>
    </Crumbs>
    <IconRow $gap={6} $pad={3}>
      <IconButton aria-label="Pin"><Icon name="pin" size={16} /></IconButton>
      <IconButton aria-label="Follow"><Icon name="target" size={17} /></IconButton>
      {children}
    </IconRow>
  </PathRow>
);

const ViewBar = styled(Bar)`
  height: 33px;
  border-top: 2px solid #0c0c0c;
  border-bottom: 1px solid #0c0c0c;
  background: #2e2e2e;
`;
const ViewTitle = styled.b`
  font-size: 11px;
`;
const Rule = styled.i`
  width: 1px;
  height: 24px;
  background: #4e4e4e;
`;
const ViewBody = styled.div`
  display: flex;
  flex: 1;
  min-height: 0;
`;
const ToolColumn = styled.div`
  display: flex;
  flex-direction: column;
  align-items: center;
  flex: none;
  width: ${(p) => p.$w}px;
  background: #393939;
  overflow: hidden;
  hr {
    align-self: stretch;
    flex: none;
    margin: ${(p) => (p.$tight ? 0 : 4)}px 3px;
    border: 0;
    border-top: 1px solid #565656;
  }
`;
const Collapse = styled.button`
  flex: none;
  align-self: stretch;
  height: 9px;
  display: flex;
  align-items: center;
  justify-content: ${(p) => (p.$right ? 'flex-end' : 'flex-start')};
  padding: 0 2px;
  background: linear-gradient(#555, #3a3a3a);
  border-bottom: 1px solid #0a0a0a;
`;
const ModeGroup = styled.div`
  display: flex;
  flex-direction: column;
  flex: none;
  margin: 6px 0 3px;
  background: #454545;
  border: 1px solid #111;
`;
const Gap = styled.div`
  flex: none;
  height: ${(p) => p.$h}px;
`;

/* Perspective projection of the ground grid: u runs to the back left, v to the back right. */
const project = (u, v) => {
  const w = 1 + 0.288 * (u + v);
  return [(352.7 - 154.3 * u + 364.3 * v) / w, (624 + 2 * u + 2.9 * v) / w];
};
const gridPath = (major) => {
  let d = '';
  for (let i = -15; i <= 45; i += 1) {
    if ((i % 5 === 0) !== major) continue;
    const k = i / 5;
    const start = -1.5 - k;
    const a = project(k, start);
    const b = project(k, 9);
    const c = project(start, k);
    const e = project(9, k);
    d += `M${a[0].toFixed(1)} ${a[1].toFixed(1)}L${b[0].toFixed(1)} ${b[1].toFixed(1)}M${c[0].toFixed(1)} ${c[1].toFixed(1)}L${e[0].toFixed(1)} ${e[1].toFixed(1)}`;
  }
  return d;
};
const MINOR = gridPath(false);
const MAJOR = gridPath(true);

const LEFT = [[349, 270], [339, 303], [335, 340], [333, 400], [333, 470], [336, 540], [342, 585], [352, 617]];
const RIGHT = [[349, 270], [361, 303], [367, 345], [370, 400], [370, 470], [367, 540], [362, 585], [352, 617]];
const outline = [...LEFT, ...RIGHT.slice(1, -1).reverse()].map((p) => p.join(',')).join(' ');
const ribs = Array.from({ length: 15 }, (_, i) => {
  const t = (i + 1) / 16;
  return LEFT.map((l, j) => `${(l[0] + (RIGHT[j][0] - l[0]) * t).toFixed(1)},${l[1]}`).join(' ');
});
const zigzag = (x0, x1, y) =>
  Array.from({ length: 8 }, (_, i) => `${(x0 + ((x1 - x0) * i) / 7).toFixed(1)},${y + (i % 2 ? 10 : 0)}`).join(' ');

const SceneBox = styled.div`
  position: relative;
  flex: 1;
  min-width: 0;
  background: linear-gradient(#698390, #97a7ae 55%, #bfc8c8);
  > svg { width: 100%; height: 100%; }
`;
const Pills = styled.div`
  position: absolute;
  top: 5px;
  right: 6px;
  display: flex;
  gap: 7px;
`;
const Pill = styled.button`
  display: flex;
  align-items: center;
  gap: 3px;
  height: 20px;
  padding: 0 7px;
  border: 1px solid #a9b0b3;
  border-radius: 10px;
  background: rgba(84, 98, 106, 0.85);
  color: #e6e6e6;
  font-size: 10px;
`;

const Scene = () => (
  <SceneBox>
    <svg viewBox="42 200 643 522" preserveAspectRatio="xMidYMid slice" role="img" aria-label="Perspective view of tube1">
      <defs>
        <linearGradient id="skin" x1="0" x2="1" y1="0" y2="0">
          <stop offset="0" stopColor="#5a5a5a" /><stop offset=".3" stopColor="#848484" /><stop offset=".75" stopColor="#8a8a8a" /><stop offset="1" stopColor="#757575" />
        </linearGradient>
      </defs>
      <path d={MINOR} stroke="#5e7280" strokeWidth="1" opacity=".45" />
      <path d={MAJOR} stroke="#5e7280" strokeWidth="2" opacity=".45" />
      <g fill="none" strokeWidth="4">
        <ellipse cx="355" cy="609" rx="10" ry="5" stroke="#a48f92" transform="rotate(-20 355 609)" />
        <ellipse cx="354" cy="641" rx="10" ry="6" stroke="#8f95b0" transform="rotate(20 354 641)" />
      </g>
      <path d="M152 480l16-6M148 473l3 1M162 473l4 3" stroke="#9b868a" strokeWidth="3" />
      <path d="M546 499l17 5M560 495l5-2M561 500l1 5" stroke="#7d86a6" strokeWidth="3" />
      <path d="M680 409l5-2" stroke="#7d86a6" strokeWidth="3" />
      <polygon points={outline} fill="url(#skin)" stroke="#666" />
      {ribs.map((r, i) => <polyline key={i} points={r} fill="none" stroke={i % 2 ? '#a3a3a3' : '#656565'} strokeWidth="1" opacity=".55" />)}
      <g fill="none" stroke="#5c5c5c" strokeWidth="1" opacity=".65">
        <polyline points={zigzag(339, 361, 303)} /><polyline points={zigzag(335, 367, 344)} />
        <polyline points={zigzag(333, 370, 406)} /><polyline points={zigzag(336, 368, 526)} /><polyline points={zigzag(340, 364, 571)} />
        <path d="M333 471q18 9 37 0" />
      </g>
      <g fill="none" strokeWidth="1">
        <path d="M62.500 701v-15" stroke="#1de01d" /><path d="M62.500 701l12 6" stroke="#e22" /><path d="M62.500 701l-11 6" stroke="#11e" />
      </g>
      <g fontSize="11" fontWeight="700" fontFamily="Liberation Mono, monospace">
        <text x="62" y="687" fill="#1de01d">y</text><text x="74" y="707" fill="#e22">x</text><text x="50" y="707" fill="#11e">z</text>
      </g>
    </svg>
    <Pills>
      <Pill>Persp<Tri $s={3} $c="#eee" /></Pill>
      <Pill>No cam<Tri $s={3} $c="#eee" /></Pill>
    </Pills>
  </SceneBox>
);

/* ---------- parameters ---------- */

const OpHeader = styled.div`
  display: flex;
  align-items: center;
  flex: none;
  height: 28px;
  padding: 0 5px 0 6px;
  gap: 4px;
  border-top: 1px solid #0c0c0c;
  border-bottom: 1px solid #0c0c0c;
  background: #3a3a3a;
`;
const Field = styled.input`
  font-family: "DejaVu Sans Mono", "Liberation Mono", monospace;
  font-size: ${(p) => (p.$dim ? 11 : 12)}px;
  flex: ${(p) => (p.$w ? 'none' : '1 1 0')};
  width: ${(p) => (p.$w ? `${p.$w}px` : 'auto')};
  min-width: 0;
  height: ${(p) => p.$h || 22}px;
  padding: 0 3px;
  background: ${(p) => (p.$dim ? '#2f2f2f' : p.$soft ? '#202020' : '#131313')};
  color: ${(p) => (p.$dim ? '#505050' : '#e2e2e2')};
  font-weight: ${(p) => (p.$bold ? 700 : 400)};
  border: 1px solid ${(p) => (p.$dim ? '#2c2c2c' : '#252525')};
`;
const OpName = styled.b`
  font-size: 11px;
  white-space: nowrap;
`;
const Params = styled.form`
  display: flex;
  flex: none;
  height: 209px;
  background: #3a3a3a;
`;
const Rows = styled.div`
  flex: 1;
  min-width: 0;
  padding-top: 2px;
`;
const ButtonLine = styled.div`
  display: flex;
  gap: 15px;
  padding-left: 3px;
  margin-bottom: 2px;
`;
const PushButton = styled.button`
  width: ${(p) => p.$w}px;
  height: 22px;
  background: linear-gradient(#525252, #3f3f3f);
  border: 1px solid #252525;
  border-top-color: #606060;
  color: #cacaca;
`;
const Marked = styled.div`
  position: relative;
  &::after {
    content: "";
    position: absolute;
    z-index: 2;
    inset: ${(p) => p.$inset};
    border: 5px solid #ee1c24;
    pointer-events: none;
  }
`;
const Row = styled.div`
  display: flex;
  align-items: center;
  height: 26px;
`;
const RowLabel = styled.label`
  flex: none;
  width: 126px;
  margin-right: 13px;
  text-align: right;
  white-space: nowrap;
  color: ${(p) => (p.$dim ? '#767676' : '#c4c4c4')};
`;
const Triple = styled.div`
  display: flex;
  flex: 1;
  min-width: 0;
  gap: 2px;
`;
const DropButton = styled.button`
  display: grid;
  place-items: center;
  flex: none;
  width: 18px;
  height: 20px;
  margin: 0 7px 0 2px;
  background: #424242;
  border: 1px solid #222;
`;
const BrowseButton = styled.button`
  flex: none;
  padding-right: 3px;
`;
const ScrollBar = styled.div`
  flex: none;
  display: flex;
  flex-direction: column;
  width: 14px;
  margin-right: 3px;
  background: #252525;
`;
const Thumb = styled.div`
  display: grid;
  place-items: center;
  height: 77px;
  background: linear-gradient(90deg, #585858, #424242);
  border-top: 1px solid #777;
`;
const ScrollEnd = styled.button`
  display: grid;
  place-items: center;
  height: 18px;
  background: #404040;
  border-top: 1px solid #0c0c0c;
`;

const FileRow = ({ id, label, value, bold }) => (
  <Row>
    <RowLabel htmlFor={id}>{label}</RowLabel>
    <Field id={id} defaultValue={value} $bold={bold} />
    <DropButton type="button" aria-label={`${label} history`}><Tri $s={3} /></DropButton>
    <BrowseButton type="button" aria-label={`Browse ${label}`}><Icon name="page" size={16} /></BrowseButton>
  </Row>
);

const PaneSplit = styled.div`
  flex: none;
  display: flex;
  align-items: center;
  justify-content: center;
  gap: 16px;
  height: 7px;
  background: #4a4a4a;
  border-top: 1px solid #777;
  border-bottom: 1px solid #2b2b2b;
`;

/* ---------- network editor ---------- */

const Network = styled.div`
  position: relative;
  flex: 1;
  min-height: 0;
  overflow: hidden;
  background: #303030;
  > svg { position: absolute; left: 0; top: 0; }
`;
const NetLabel = styled.h2`
  position: absolute;
  right: 12px;
  top: 14px;
  margin: 0;
  font-size: 23px;
  line-height: 32px;
  font-weight: 700;
  color: #505050;
`;
const NodeBox = styled.div`
  position: absolute;
  left: ${(p) => p.$x}px;
  top: ${(p) => p.$y}px;
  display: flex;
  align-items: center;
  gap: 5px;
  font-size: 10px;
  color: #bdbdbd;
`;
const NodeBody = styled.span`
  display: grid;
  place-items: center;
  width: 50px;
  height: 16px;
  border-radius: 2px;
  background: linear-gradient(102deg, transparent 0 12%, #888 12% 14%, transparent 14% 22%, #888 22% 24%, transparent 24% 73%,
    #888 73% 75%, transparent 75% 83%, ${(p) => (p.$flag ? '#00aef2 83%' : '#888 83% 85%, transparent 85%')}), #cbcbcb;
`;

const NODES = [
  ['tube1', 96, 24, 'tube'],
  ['line1', 218, 24, 'lineNode'],
  ['subdivide1', 96, 66, 'blob'],
  ['skeleton1', 218, 66, 'bone'],
  ['captureproximity1', 162, 112, 'capture'],
  ['name1', 162, 154, 'tag'],
];
const PORTS = [[121, 21], [121, 44], [111, 62], [131, 62], [243, 44], [243, 62], [121, 85], [243, 85], [177, 109], [197, 109], [187, 132], [187, 151], [187, 174], [280, 186], [293, 186], [306, 186]];

/* ---------- play bar ---------- */

const PlayBar = styled.footer`
  display: flex;
  flex: none;
  height: 71px;
  background: #2e2e2e;
  border-top: 1px solid #606060;
`;
const PlayStack = styled.div`
  display: flex;
  flex-direction: column;
  flex: ${(p) => (p.$grow ? '1 1 0' : 'none')};
  min-width: 0;
`;
const Line = styled.div`
  display: flex;
  align-items: center;
  height: ${(p) => p.$h}px;
  padding-left: ${(p) => p.$pl || 0}px;
`;
const KeyButton = styled.button`
  display: grid;
  place-items: center;
  flex: none;
  width: ${(p) => p.$w || 27}px;
  height: ${(p) => p.$h || 28}px;
  margin-left: ${(p) => p.$ml || 0}px;
  background: ${(p) => (p.$on ? 'linear-gradient(#5f7480, #87939a)' : 'linear-gradient(#4f4f4f, #3c3c3c)')};
  border: 1px solid #141414;
  border-top-color: #5a5a5a;
`;
const Timeline = styled.svg`
  width: 100%;
  height: 42px;
  overflow: hidden;
  font-size: 9px;
`;
const Range = styled.div`
  flex: 1;
  display: flex;
  align-items: center;
  justify-content: space-between;
  height: 10px;
  background: linear-gradient(#858585, #858585) center / calc(100% - 10px) 2px no-repeat;
`;
const KeySide = styled.div`
  display: flex;
  align-items: center;
  flex: none;
  padding: 0 6px 3px 4px;
`;
const KeyRound = styled.button`
  display: grid;
  place-items: center;
  width: 40px;
  height: 40px;
  border-radius: 50%;
  background: #373737;
  border: 1px solid #1b1b1b;
`;
const KeyMenu = styled.button`
  display: grid;
  place-items: center;
  width: 17px;
  height: 20px;
  margin-left: -3px;
  background: #3e3e3e;
  border: 1px solid #1d1d1d;
`;
const ChannelStack = styled.div`
  display: flex;
  flex-direction: column;
  gap: ${(p) => p.$gap}px;
  margin-left: ${(p) => p.$ml}px;
`;
const KeysButton = styled(PushButton)`
  display: flex;
  align-items: center;
  justify-content: space-between;
  height: 24px;
  padding: 0 7px 0 16px;
`;
const Status = styled.div`
  position: relative;
  flex: none;
  display: flex;
  justify-content: flex-end;
  height: 26px;
  background: #181818;
  border-top: 1px solid #050505;
  overflow: hidden;
`;
const CookBox = styled.div`
  display: flex;
  align-items: center;
  gap: 8px;
  width: 172px;
  padding-left: 6px;
  background: #262626;
  opacity: 0.8;
`;
const Stamp = styled.span`
  position: absolute;
  right: 7px;
  top: -3px;
  font: 16px/20px "Liberation Sans", sans-serif;
  color: #c4c4c4;
`;
const Activate = styled.span`
  position: absolute;
  right: 30px;
  top: 12px;
  font-size: 20px;
  line-height: 28px;
  color: rgba(190, 190, 190, 0.5);
`;

const tick = (f) => `${((f - 1) / 240) * 100}%`;

export default function App() {
  return (
    <Window>
      <Global />
      <Defs />
      <TitleBar>
        <Icon name="houdini" size={16} />
        <Title>D:/0_WorkSpace/Houdini/TestRig3.hip - Houdini FX 18.5.408</Title>
        <WinButton aria-label="Minimize"><svg width="10" height="10"><path d="M0 5.500h10" stroke="#000" /></svg></WinButton>
        <WinButton aria-label="Maximize"><svg width="10" height="10"><rect x=".500" y=".500" width="9" height="9" fill="none" stroke="#000" /></svg></WinButton>
        <WinButton aria-label="Close"><svg width="10" height="10"><path d="M0 0l10 10M10 0L0 10" stroke="#000" /></svg></WinButton>
      </TitleBar>

      <MenuBar>
        <Grip><Tri $d="up" $s={3} $c="#0a0a0a" /></Grip>
        <Menus $gap={8} $pad={6}>
          {['File', 'Edit', 'Render', 'Assets', 'Windows', 'Help'].map((m) => <MenuButton key={m}>{m}</MenuButton>)}
        </Menus>
        <Select label="Desktop" value="Build" icon="desk" $w={128} $h={23} $pad={5} $ml={22} $fs={12} />
        <Select label="Radial menu" value="Main" icon="aim" $w={128} $h={23} $pad={5} $ml={4} $fs={12} />
        <Spring />
        <Select label="Take" value="Main" icon="clapBig" $w={170} $h={23} $pad={5} $fs={12} />
        <IconRow $pad={8}><IconButton aria-label="Help"><Icon name="help" size={15} /></IconButton></IconRow>
      </MenuBar>

      <Shelves>
        <Grip><Tri $d="up" $s={3} $c="#0a0a0a" /></Grip>
        <ShelfPanel
          grow={607}
          pad={17}
          tabs={['Create', 'Modify', 'Model', 'Poly…', 'Defo…', 'Text…', 'Rigg…', 'Musc…', 'Char…', 'Cons…', 'Hair…', 'Guid…', 'Guid…']}
          tools={[['box', 'Box'], ['sphere', 'Sphere'], ['tube', 'Tube'], ['torus', 'Torus'], ['grid', 'Grid'], ['null', 'Null'], ['line', 'Line'], ['circle', 'Circle'], ['curve', 'Curve'], ['drawcurve', 'Draw Curve'], ['path', 'Path'], ['spray', 'Spray Paint'], ['font', 'Font']]}
        />
        <ShelfSplit><Dots $w={6} $h={15} $c="#0c0c0c" /></ShelfSplit>
        <ShelfPanel
          grow={701}
          pad={16}
          tabs={['Ligh…', 'Coll…', 'Part…', 'Grains', 'Vell…', 'Rigi…', 'Part…', 'Visc…', 'Oceans', 'Flui…', 'Popu…', 'Cont…', 'Pyr…', 'Spa…', 'FEM', 'Wires']}
          tools={[['camera', 'Camera'], ['pointlight', 'Point Light'], ['spotlight', 'Spot Light'], ['arealight', 'Area Light'], ['geolight', 'Geometry Light', true], ['volume', 'Volume Light'], ['distant', 'Distant Light'], ['envlight', 'Environment Light', true], ['sky', 'Sky Light'], ['gi', 'GI Light'], ['caustic', 'Caustic Light'], ['portal', 'Portal Light']]}
          extra={<ToolButton $narrow aria-label="Ambient"><Gap $h={21} />An</ToolButton>}
        />
      </Shelves>

      <Main>
        <SideRail><Tri $d="right" $s={3} /><Dots $w={4} $h={20} /><Tri $d="right" $s={3} /></SideRail>
        <Pane $grow={703}>
          <Tabs items={['Scene View', 'Animation Editor', 'Render View', 'Composite View', 'Motion FX View', 'Geometry Spreadsheet']} />
          <PathBar>
            <PathTools $gap={6}>
              <IconButton aria-label="Shading" $menu="down"><Icon name="cube" size={17} /></IconButton>
              <IconButton aria-label="Ghosting" $menu="down"><Icon name="ghost" size={17} /></IconButton>
              <IconButton aria-label="Layout" $menu="down"><Icon name="square" size={17} /></IconButton>
            </PathTools>
          </PathBar>
          <ViewBar>
            <Grip><Tri $d="up" $s={3} $c="#0a0a0a" /></Grip>
            <IconRow $pad={4}><IconButton aria-label="View tool" $menu="down"><Icon name="camera" size={18} /></IconButton></IconRow>
            <ViewTitle>View</ViewTitle>
            <Spring $g={1.1} />
            <IconRow $gap={15}>
              <IconButton aria-label="Tumble" $menu="down"><Icon name="orbit" size={18} /></IconButton>
              <IconButton aria-label="Pan" $menu="down"><Icon name="pan" size={18} /></IconButton>
              <IconButton aria-label="Dolly" $menu="down"><Icon name="dolly" size={18} /></IconButton>
            </IconRow>
            <IconRow $gap={5} $pad={6}>
              <Rule />
              <IconButton aria-label="Camera view" $on $w={22} $h={24}><Icon name="camera" size={17} /></IconButton>
              <IconButton aria-label="Zoom region" $w={24}><Icon name="zoomin" size={15} /></IconButton>
              <Rule />
              <IconButton aria-label="Stop" $w={24}><Icon name="stop" size={17} /></IconButton>
            </IconRow>
            <Spring />
            <IconRow $gap={6} $pad={4}>
              <IconButton aria-label="Handles" $menu="down"><Icon name="people" size={16} /></IconButton>
              <IconButton aria-label="Help"><Icon name="help" size={15} /></IconButton>
            </IconRow>
          </ViewBar>
          <ViewBody>
            <ToolColumn $w={34}>
              <Collapse aria-label="Collapse toolbar"><Tri $d="left" $s={3} $c="#0a0a0a" /></Collapse>
              <ModeGroup>
                <IconButton aria-label="Objects" $w={24} $h={23} $menu="right"><Icon name="cone" size={17} /></IconButton>
                <IconButton aria-label="Points" $w={24} $h={24} $on $menu="right"><Icon name="diamonds" size={17} /></IconButton>
                <IconButton aria-label="Dynamics" $w={24} $h={23} $menu="right"><Icon name="goldbox" size={17} /></IconButton>
              </ModeGroup>
              <hr />
              <Gap $h={17} />
              <IconButton aria-label="Select" $w={28} $h={28} $menu="right"><Icon name="pointer" size={19} /></IconButton>
              <IconButton aria-label="Secure selection" $w={26} $h={28} $on><Icon name="lockcur" size={15} /></IconButton>
              {['move', 'rotate', 'scale', 'pose'].map((n) => <IconButton key={n} aria-label={n} $w={28} $h={28}><Icon name={n} size={18} /></IconButton>)}
              <IconButton aria-label="Handles" $w={28} $h={28} $menu="right"><Icon name="gizmo" size={18} /></IconButton>
              <hr />
              {['magnetgrid', 'magnetcurve', 'magnetpt', 'magnet'].map((n) => <IconButton key={n} aria-label={n} $w={28} $h={28} $menu="right"><Icon name={n} size={20} /></IconButton>)}
              <hr />
              <IconButton aria-label="View" $w={26} $h={9} $on />
              <Gap $h={5} /><Tri $s={4} $c="#888" /><Gap $h={5} />
              <IconButton aria-label="Sheets" $w={28} $h={26} $menu="right"><Icon name="sheets" size={16} /></IconButton>
              <IconButton aria-label="Flipbook" $w={28} $h={26} $menu="right"><Icon name="reel" size={19} /></IconButton>
            </ToolColumn>
            <Scene />
            <ToolColumn $w={26} $tight>
              <Collapse $right aria-label="Collapse display bar"><Tri $d="right" $s={3} $c="#0a0a0a" /></Collapse>
              <Gap $h={19} />
              {[['mesh', 1, 1], ['snap', 0, 1], ['lock'], ['bulbx'], ['balls', 0, 1], ['bulb', 1, 1], ['bulbplus', 0, 1], ['bulbring', 0, 1], ['checker', 1, 1], ['glasses', 0, 1], ['glassplay', 0, 1]].map(([n, on, menu]) => (
                <IconButton key={n} aria-label={n} $w={22} $h={25} $on={on === 1} $menu={menu && 'right'}><Icon name={n} size={17} /></IconButton>
              ))}
              <hr />
              <Gap $h={2} />
              {['dot', 'ptnormal', 'pttrail', 'ptnum', 'prim', 'primnum', 'hull', 'chips'].map((n) => (
                <IconButton key={n} aria-label={n} $w={22} $h={25}><Icon name={n} size={15} /></IconButton>
              ))}
              <Gap $h={2} /><Tri $s={4} $c="#888" />
            </ToolColumn>
          </ViewBody>
        </Pane>

        <SideRail><Tri $d="left" $s={3} /><Dots $w={4} $h={20} /><Tri $d="right" $s={3} /></SideRail>

        <Pane $grow={611}>
          <Tabs italic items={['rop_fbxcharacteroutput1', 'Take List', 'Performance Monitor']} />
          <PathBar />
          <OpHeader>
            <Icon name="rop" size={17} />
            <OpName>ROP FBX Character Output</OpName>
            <Field aria-label="Node name" defaultValue="rop_fbxcharacteroutput1" />
            <IconRow $gap={6}>
              <IconButton aria-label="Settings" $menu="down"><Icon name="gear" size={15} /></IconButton>
              <IconButton aria-label="Houdini" $menu="down"><Icon name="hlogo" size={16} /></IconButton>
              <IconButton aria-label="Search"><Icon name="search" size={16} /></IconButton>
              <IconButton aria-label="Info"><Icon name="info" size={15} /></IconButton>
              <IconButton aria-label="Help"><Icon name="help" size={15} /></IconButton>
            </IconRow>
          </OpHeader>
          <Params onSubmit={(e) => e.preventDefault()}>
            <Rows>
              <ButtonLine>
                <Marked $inset="-8px -5px -6px -6px"><PushButton type="button" $w={91}>Save to Disk</PushButton></Marked>
                <PushButton type="button" $w={85}>Controls...</PushButton>
              </ButtonLine>
              <Row><RowLabel as="span">Clip Range</RowLabel><Select label="Clip Range" value="Use clipinfo Detail Attribute" $w={214} $pad={14} /></Row>
              <Row>
                <RowLabel $dim htmlFor="start">Start/End/Inc</RowLabel>
                <Triple>
                  <Field id="start" $dim defaultValue="1" /><Field aria-label="End" $dim defaultValue="240" /><Field aria-label="Increment" $dim defaultValue="1" />
                </Triple>
              </Row>
              <Row><RowLabel as="span">Render with Take</RowLabel><Select label="Render with Take" value="(Current)" $w={94} $pad={14} /></Row>
              <FileRow id="in" label="Input FBX File" value="" />
              <Marked $inset="-2px 221px -7px 39px"><FileRow id="out" label="Output FBX File" value="C:/Users/admin/Desktop/test.fbx" bold /></Marked>
              <Row><RowLabel as="span">Skinning Method</RowLabel><Select label="Skinning Method" value="Linear" $w={217} $pad={14} /></Row>
              <Row><RowLabel $dim htmlFor="blend">Blend Attribute</RowLabel><Field id="blend" $dim defaultValue="" /></Row>
            </Rows>
            <ScrollBar>
              <Thumb><Dots $w={9} $h={12} $c="#0c0c0c" /></Thumb>
              <Spring />
              <ScrollEnd type="button" aria-label="Scroll up"><Tri $d="up" $s={3} $c="#5a5a5a" /></ScrollEnd>
              <ScrollEnd type="button" aria-label="Scroll down"><Tri $s={3} /></ScrollEnd>
            </ScrollBar>
          </Params>
          <PaneSplit><Tri $d="up" $s={3} /><Dots $w={20} $h={5} /><Tri $s={3} /></PaneSplit>
          <Tabs italic items={['/obj/tube1', 'Tree View', 'Material Palette', 'Asset Browser']} />
          <PathBar />
          <MenuBar $framed>
            <Grip><Tri $d="up" $s={3} $c="#0a0a0a" /></Grip>
            <Menus $gap={14} $pad={8}>
              {['Add', 'Edit', 'Go', 'View', 'Tools', 'Layout', 'Help'].map((m) => <MenuButton key={m}>{m}</MenuButton>)}
            </Menus>
            <IconRow $gap={8} $pad={8}>
              {['wrench', 'tree', 'list'].map((n) => <IconButton key={n} aria-label={n} $w={16}><Icon name={n} size={16} /></IconButton>)}
            </IconRow>
            <IconRow $gap={8} $pad={16}>
              {['palette', 'table'].map((n) => <IconButton key={n} aria-label={n} $w={16}><Icon name={n} size={16} /></IconButton>)}
            </IconRow>
            <IconRow $gap={8} $pad={8}>
              {['panels', 'note', 'image', 'crate'].map((n) => <IconButton key={n} aria-label={n} $w={16}><Icon name={n} size={16} /></IconButton>)}
            </IconRow>
            <Spring />
            <IconRow $gap={8} $pad={4}>
              {['search', 'eye'].map((n) => <IconButton key={n} aria-label={n} $w={16}><Icon name={n} size={16} /></IconButton>)}
            </IconRow>
          </MenuBar>
          <Network>
            <NetLabel>Geometry</NetLabel>
            <svg width="460" height="230" aria-hidden="true">
              <circle cx="187" cy="162" r="26" fill="#48699b" /><circle cx="187" cy="162" r="17" fill="#9273c9" />
              <g fill="none" stroke="#4d7db4" strokeWidth="1">
                <path d="M121 44L111 62M121 85c0 9 4 12 10 12h35c7 0 11 4 11 12M187 132v19" />
                <path d="M243 44v18M243 85c0 9-4 12-12 12h-22c-8 0-12 4-12 12" strokeDasharray="2 2" />
              </g>
              <path d="M187 174c0 5 4 7 8 7l75-2c6 0 10 2 10 7M243 85l50 101" fill="none" stroke="#84a266" />
              {PORTS.map(([x, y]) => <circle key={`${x}-${y}`} cx={x} cy={y} r="2.500" fill="#b9b9b9" />)}
              <path d="M267 189h52v17h-42l-10-9z" fill="#a5627d" stroke="#111" strokeWidth="3" />
              <path d="M267 188h52v18h-43l-9-9z" fill="none" stroke="#f2c40f" strokeWidth="2" />
              <g transform="translate(286 190) scale(.750)">{ICONS.rop}</g>
              <circle cx="222" cy="131" r="4" fill="#3f86cf" /><path d="M223 129l-2 4" stroke="#fff" />
              <path d="M275 84h7v5h-7z" fill="#5f6664" /><path d="M276.500 84v-1a2 2 0 0 1 4 0v1" fill="none" stroke="#5f6664" />
            </svg>
            {NODES.map(([n, x, y, icon]) => (
              <NodeBox key={n} $x={x} $y={y}><NodeBody $flag={n === 'name1'}><Icon name={icon} size={13} /></NodeBody>{n}</NodeBox>
            ))}
            <NodeBox $x={323} $y={189}>rop_fbxcharacteroutput1</NodeBox>
          </Network>
        </Pane>
      </Main>

      <PlayBar>
        <Grip $end><Tri $s={3} $c="#0a0a0a" /></Grip>
        <PlayStack>
          <Line $h={43} $pl={4}>
            <KeyButton aria-label="First frame"><Icon name="first" size={20} /></KeyButton>
            <KeyButton aria-label="Play reverse"><Icon name="prev" size={17} /></KeyButton>
            <KeyButton aria-label="Stop" $on><Icon name="stopbtn" size={17} /></KeyButton>
            <KeyButton aria-label="Play"><Icon name="play" size={17} /></KeyButton>
            <KeyButton aria-label="Last frame"><Icon name="last" size={20} /></KeyButton>
            <IconRow $pad={3}><Field aria-label="Frame" defaultValue="1" $w={47} $h={27} /></IconRow>
            <KeyButton aria-label="Step back" $w={14}><Icon name="stepback" size={11} /></KeyButton>
            <KeyButton aria-label="Step forward" $w={14}><Icon name="stepfwd" size={11} /></KeyButton>
          </Line>
          <Line $h={24} $pl={4}>
            <KeyButton aria-label="Scope" $h={24}><Icon name="pick" size={17} /></KeyButton>
            <KeyButton aria-label="Audio" $h={24}><Icon name="audio" size={17} /></KeyButton>
            <KeyButton aria-label="Loop" $h={24}><Icon name="loop" size={17} /></KeyButton>
            <KeyButton aria-label="Real time" $h={24}><Icon name="clock" size={18} /></KeyButton>
            <KeyButton aria-label="Previous key" $w={23} $h={24} $ml={4}><Icon name="keyprev" size={11} /></KeyButton>
            <KeyButton aria-label="Next key" $w={23} $h={24}><Icon name="keynext" size={11} /></KeyButton>
          </Line>
        </PlayStack>
        <PlayStack $grow>
          <Line $h={43} $pl={5}>
            <Timeline>
              <path d="M0 22.500h2000" stroke="#a0a0a0" />
              {Array.from({ length: 40 }, (_, i) => (i + 1) * 6).map((f) => (
                <line key={f} x1={tick(f)} x2={tick(f)} y1={f % 24 ? 19 : 15} y2={f % 24 ? 27 : 30} stroke={f % 24 ? '#777' : '#a0a0a0'} />
              ))}
              {Array.from({ length: 10 }, (_, i) => (i + 1) * 24).map((f) => (
                <text key={f} x={tick(f)} y="9" fill="#9a9a9a">{f}</text>
              ))}
              <path d="M1 1h23v17H5l-4 4z" fill="#000" stroke="#f0f0f0" />
              <text x="12" y="15" textAnchor="middle" fill="#fff" fontSize="12">1</text>
            </Timeline>
          </Line>
          <Line $h={24} $pl={5}>
            <Field aria-label="Global start" defaultValue="1" $w={42} $soft />
            <IconRow $pad={3}><Field aria-label="Range start" defaultValue="1" $w={42} /></IconRow>
            <Range><Tri $d="right" $s={5} $c="#bbb" /><Tri $d="left" $s={5} $c="#bbb" /></Range>
            <IconRow $gap={3}>
              <Field aria-label="Range end" defaultValue="240" $w={42} />
              <Field aria-label="Global end" defaultValue="240" $w={42} $soft />
            </IconRow>
          </Line>
        </PlayStack>
        <KeySide>
          <KeyRound aria-label="Set key"><Icon name="key" size={17} /></KeyRound>
          <KeyMenu aria-label="Key menu"><Tri $s={3} /></KeyMenu>
          <ChannelStack $gap={4} $ml={8}>
            <KeyButton aria-label="Sync channels" $w={23} $h={24}><Icon name="sync" size={15} /></KeyButton>
            <KeyButton aria-label="Animation curves" $w={23} $h={24}><Icon name="wave" size={15} /></KeyButton>
          </ChannelStack>
          <ChannelStack $gap={5} $ml={6}>
            <KeysButton $w={152}>0 keys, 0/0 channels<Tri $d="up" $s={4} $c="#8c8c8c" /></KeysButton>
            <Select label="Key channels" value="Key All Channels" $w={152} $pad={12} />
          </ChannelStack>
        </KeySide>
      </PlayBar>

      <Status>
        <CookBox>
          <Icon name="cook" size={18} />
          <Icon name="refresh" size={16} />
          <Select label="Cook mode" value="Auto Update" $w={112} $h={22} $pad={14} $ml={2} />
        </CookBox>
        <Activate>激活 Windows</Activate>
        <Stamp>https://blog.csdn.net/u013412391</Stamp>
      </Status>
    </Window>
  );
}
